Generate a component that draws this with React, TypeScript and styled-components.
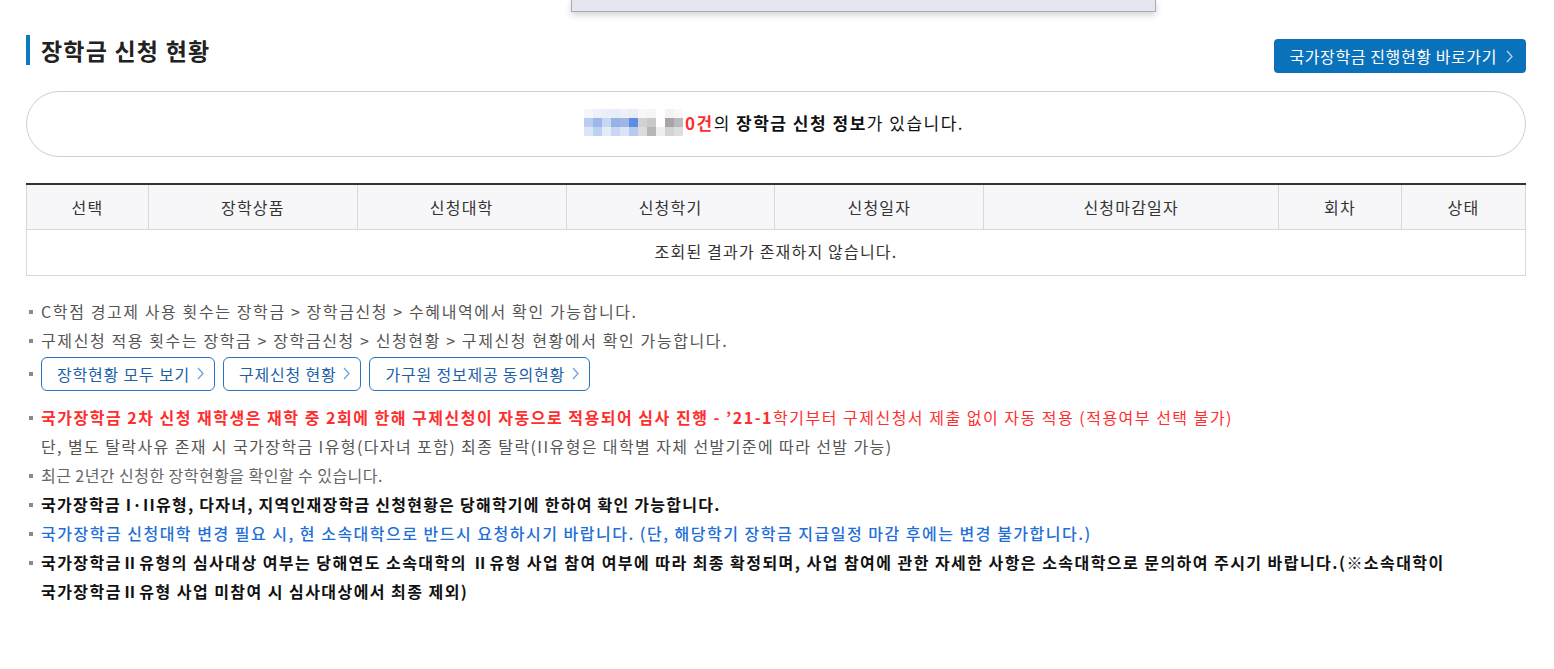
import React from "react";
import styled, { createGlobalStyle } from "styled-components";

const Global = createGlobalStyle`
  html, body { margin: 0; padding: 0; background: #fff; }
  body {
    font-family: "Noto Sans CJK KR", "Noto Sans", sans-serif;
    color: #333;
    -webkit-font-smoothing: antialiased;
  }
  * { box-sizing: border-box; }
`;

const Page = styled.div`
  position: relative;
  padding: 35px 28px 40px 26px;
  width: 1554px;
`;

const Popup = styled.div`
  position: absolute;
  top: 0;
  left: 571px;
  width: 585px;
  height: 12px;
  background: #e6e6f1;
  border: 1px solid #a9a9b1;
  border-top: none;
  box-shadow: 0 3px 7px rgba(0, 0, 0, 0.18);
`;

const Header = styled.div`
  display: flex;
  justify-content: space-between;
  align-items: flex-start;
`;

const Title = styled.h2`
  margin: 0;
  height: 30px;
  display: flex;
  align-items: center;
  border-left: 4px solid #0b79c4;
  padding-left: 11px;
  font-size: 23px;
  font-weight: 700;
  color: #222;
  line-height: 30px;
  letter-spacing: 1.2px;
`;

const PrimaryButton = styled.a`
  margin-top: 4px;
  height: 34px;
  display: inline-flex;
  align-items: center;
  gap: 9px;
  padding: 0 13px 0 15px;
  background: #0a72ba;
  color: #fff;
  border-radius: 4px;
  font-size: 16px;
  letter-spacing: 0.6px;
  text-decoration: none;
  cursor: pointer;
`;

const InfoBox = styled.div`
  margin-top: 18px;
  height: 66px;
  border: 1px solid #cfcfcf;
  border-radius: 33px;
  display: flex;
  align-items: center;
  justify-content: center;
  font-size: 17px;
  letter-spacing: 1.5px;
  color: #111;
  padding: 0 4px 3px 0;
`;

const Red = styled.b`
  color: #ff2e2e;
  font-weight: 700;
`;

const Strong = styled.b`
  font-weight: 700;
  color: #111;
`;

const Table = styled.table`
  margin-top: 26px;
  width: 100%;
  border-collapse: collapse;
  border-top: 2px solid #333;
  font-size: 16px;
  letter-spacing: 1.2px;
  color: #333;
`;

const Th = styled.th<{ $w: number }>`
  width: ${(p) => p.$w}px;
  height: 45px;
  background: #f7f7f9;
  font-weight: 400;
  border: 1px solid #d8d8d8;
  border-top: none;
  text-align: center;
  padding: 0;
`;

const Td = styled.td`
  height: 46px;
  text-align: center;
  border: 1px solid #d8d8d8;
  padding: 0 0 2px;
`;

const Notes = styled.ul`
  list-style: none;
  margin: 21px 0 0;
  padding: 0;
`;

type Tone = "gray" | "light" | "red" | "black" | "blue";

const toneColor: Record<Tone, string> = {
  gray: "#555",
  light: "#666",
  red: "#ff2e2e",
  black: "#111",
  blue: "#1f6fd8",
};

const Item = styled.li<{ $tone?: Tone; $space?: boolean; $ls?: number }>`
  display: flex;
  align-items: flex-start;
  font-size: 16px;
  line-height: 29px;
  padding: ${(p) => (p.$space ? "2px 0 12px" : "0")};
  letter-spacing: ${(p) => p.$ls ?? 1.6}px;
  color: ${(p) => toneColor[p.$tone ?? "gray"]};
  font-weight: ${(p) => (p.$tone === "black" ? 700 : p.$tone === "blue" ? 500 : 400)};
`;

const Bullet = styled.span<{ $top?: number }>`
  flex: none;
  width: 4px;
  height: 4px;
  background: #8a8a8a;
  margin: ${(p) => p.$top ?? 13}px 8px 0 3px;
`;

const Body = styled.div`
  flex: 1;
`;

const Sub = styled.span`
  color: #555;
  font-weight: 400;
  letter-spacing: 1.4px;
`;

const Bold = styled.b`
  font-weight: 700;
`;

const LinkRow = styled.div`
  display: flex;
  gap: 8px;
`;

const OutlineButton = styled.a`
  height: 34px;
  display: inline-flex;
  align-items: center;
  gap: 7px;
  padding: 0 10px 0 15px;
  border: 1px solid #2a74bf;
  border-radius: 6px;
  color: #1e5fa8;
  font-size: 16px;
  letter-spacing: 0.8px;
  line-height: 1;
  cursor: pointer;
`;

const Chevron = ({ color }: { color: string }) => (
  <svg width="7" height="13" viewBox="0 0 7 13" fill="none">
    <path d="M1 1 L6 6.5 L1 12" stroke={color} strokeWidth="1.3" />
  </svg>
);

const mosaic: string[][] = [
  ["#f4f6fb", "#eef1f9", "#eaeef8", "#e9edf7", "#eef0f8", "#eaedf7", "#f7f7f7", "#f5f5f5", "#ffffff", "#f3f3f3", "#f8f8f8"],
  ["#b9cdee", "#9bb8e8", "#c7d6f1", "#97b2e4", "#9fb5e6", "#5b8ee0", "#d0d3d6", "#c9c9c9", "#ffffff", "#aaa5a2", "#b8bcbf"],
  ["#dce6f6", "#bcd0f0", "#e4ebf8", "#c9d7f2", "#dbe3f5", "#b6c9ee", "#dadcdd", "#b5b5b5", "#eeeeee", "#d3d3d3", "#dddddd"],
];

const Mosaic = () => (
  <svg width="99" height="27" viewBox="0 0 99 27" style={{ marginRight: 2 }}>
    {mosaic.map((row, r) =>
      row.map((c, i) => <rect key={`${r}-${i}`} x={i * 9} y={r * 9} width="9" height="9" fill={c} />)
    )}
  </svg>
);

const columns: [string, number][] = [
  ["선택", 122],
  ["장학상품", 209],
  ["신청대학", 209],
  ["신청학기", 209],
  ["신청일자", 209],
  ["신청마감일자", 295],
  ["회차", 123],
  ["상태", 124],
];

export default function App() {
  return (
    <>
      <Global />
      <Page>
        <Popup />
        <Header>
          <Title>장학금 신청 현황</Title>
          <PrimaryButton>
            국가장학금 진행현황 바로가기
            <Chevron color="#b9d6ee" />
          </PrimaryButton>
        </Header>

        <InfoBox>
          <Mosaic />
          <Red>0건</Red>의&nbsp;<Strong>장학금 신청 정보</Strong>가 있습니다.
        </InfoBox>

        <Table>
          <thead>
            <tr>
              {columns.map(([label, w]) => (
                <Th key={label} $w={w}>
                  {label}
                </Th>
              ))}
            </tr>
          </thead>
          <tbody>
            <tr>
              <Td colSpan={8}>조회된 결과가 존재하지 않습니다.</Td>
            </tr>
          </tbody>
        </Table>

        <Notes>
          <Item>
            <Bullet />
            <Body>C학점 경고제 사용 횟수는 장학금 &gt; 장학금신청 &gt; 수혜내역에서 확인 가능합니다.</Body>
          </Item>
          <Item>
            <Bullet />
            <Body>구제신청 적용 횟수는 장학금 &gt; 장학금신청 &gt; 신청현황 &gt; 구제신청 현황에서 확인 가능합니다.</Body>
          </Item>
          <Item $space>
            <Bullet $top={15} />
            <LinkRow>
              <OutlineButton>
                장학현황 모두 보기 <Chevron color="#6ea3d8" />
              </OutlineButton>
              <OutlineButton>
                구제신청 현황 <Chevron color="#6ea3d8" />
              </OutlineButton>
              <OutlineButton>
                가구원 정보제공 동의현황 <Chevron color="#6ea3d8" />
              </OutlineButton>
            </LinkRow>
          </Item>
          <Item $tone="red" $ls={1.5}>
            <Bullet />
            <Body>
              <Bold>국가장학금 2차 신청 재학생은 재학 중 2회에 한해 구제신청이 자동으로 적용되어 심사 진행 - ’21-1</Bold>
              학기부터 구제신청서 제출 없이 자동 적용 (적용여부 선택 불가)
              <br />
              <Sub>단, 별도 탈락사유 존재 시 국가장학금 I유형(다자녀 포함) 최종 탈락(II유형은 대학별 자체 선발기준에 따라 선발 가능)</Sub>
            </Body>
          </Item>
          <Item $tone="light" $ls={0.45}>
            <Bullet />
            <Body>최근 2년간 신청한 장학현황을 확인할 수 있습니다.</Body>
          </Item>
          <Item $tone="black" $ls={1.25}>
            <Bullet />
            <Body>국가장학금 I·II유형, 다자녀, 지역인재장학금 신청현황은 당해학기에 한하여 확인 가능합니다.</Body>
          </Item>
          <Item $tone="blue" $ls={1.5}>
            <Bullet />
            <Body>
              국가장학금 신청대학 변경 필요 시, 현 소속대학으로 반드시 요청하시기 바랍니다. (단, 해당학기 장학금 지급일정 마감 후에는 변경 불가합니다.)
            </Body>
          </Item>
          <Item $tone="black" $ls={1.45}>
            <Bullet />
            <Body>
              국가장학금Ⅱ유형의 심사대상 여부는 당해연도 소속대학의 Ⅱ유형 사업 참여 여부에 따라 최종 확정되며, 사업 참여에 관한 자세한 사항은 소속대학으로 문의하여 주시기 바랍니다.(※소속대학이
              <br />
              국가장학금Ⅱ유형 사업 미참여 시 심사대상에서 최종 제외)
            </Body>
          </Item>
        </Notes>
      </Page>
    </>
  );
}
